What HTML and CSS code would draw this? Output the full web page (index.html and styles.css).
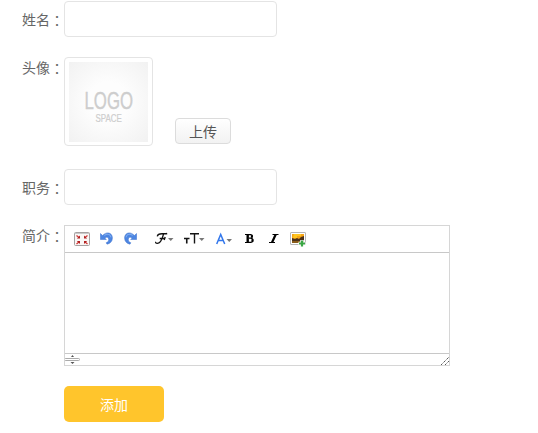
FILE: index.html
```html
<!DOCTYPE html>
<html lang="zh-CN">
<head>
<meta charset="utf-8">
<title>添加</title>
<link rel="stylesheet" href="styles.css">
</head>
<body>
<form class="form">
  <div class="row row-name">
    <label class="label" for="name">姓名<span class="colon" lang="zh-TW">：</span></label>
    <input class="input" id="name" type="text">
  </div>
  <div class="row row-avatar">
    <span class="label">头像<span class="colon" lang="zh-TW">：</span></span>
    <div class="avatar">
      <svg width="79" height="80" viewBox="0 0 79 80">
        <defs><radialGradient id="shade" r=".72"><stop offset=".35" stop-color="#fdfdfd"/><stop offset="1" stop-color="#f1f1f1"/></radialGradient></defs>
        <rect width="79" height="80" fill="url(#shade)"/>
        <text class="logo logo-large" transform="translate(15.500 47) scale(.7 1)">LOGO</text>
        <text class="logo logo-small" transform="translate(26.500 59.500) scale(.76 1)">SPACE</text>
      </svg>
    </div>
    <button class="upload" type="button">上传</button>
  </div>
  <div class="row row-job">
    <label class="label" for="job">职务<span class="colon" lang="zh-TW">：</span></label>
    <input class="input" id="job" type="text">
  </div>
  <div class="row row-intro">
    <span class="label">简介<span class="colon" lang="zh-TW">：</span></span>
    <div class="editor">
      <div class="toolbar">
        <svg class="icon full" width="16" height="14" viewBox="0 0 16 14">
          <rect x=".5" y=".5" width="15" height="13" rx="1" fill="#faf7f6" stroke="#a5a1a1"/>
          <path d="M1 1.500h14" stroke="#c9c9c9"/>
          <path d="M2.500 3.500l2.500 2M13.500 3.500l-2.500 2M2.500 12l2.500-2M13.500 12l-2.500-2" stroke="#d03a3a" stroke-width="1.300"/>
          <path d="M6 3.500v3H2.800zM10 3.500v3h3.200zM6 12V9H2.800zM10 12V9h3.200z" fill="#b02020"/>
        </svg>
        <svg class="icon undo" width="13" height="13" viewBox="0 0 13 13">
          <path d="M.4 1.500v6H6.300L4.800 6C6.600 4.500 8.700 5 8.700 7.300c0 1.800-.7 2.700-2.500 3.500l.8 1.400c3.400-.7 5.400-2.900 5.400-6.200C12.400.6 6.600-1 2.600 3.500z" fill="#4d86e2" stroke="#3c70cd" stroke-width=".5"/>
          <path d="M4.500 3.400c2.800-2.100 6-1.200 6.400 1.900" fill="none" stroke="#90b9f5"/>
        </svg>
        <svg class="icon redo" width="13" height="13" viewBox="0 0 13 13">
          <g transform="translate(13 0) scale(-1 1)">
            <path d="M.4 1.500v6H6.300L4.800 6C6.600 4.500 8.700 5 8.700 7.300c0 1.800-.7 2.700-2.500 3.500l.8 1.400c3.400-.7 5.400-2.900 5.400-6.200C12.400.6 6.600-1 2.600 3.500z" fill="#4d86e2" stroke="#3c70cd" stroke-width=".5"/>
            <path d="M4.500 3.400c2.800-2.100 6-1.200 6.400 1.900" fill="none" stroke="#90b9f5"/>
          </g>
        </svg>
        <svg class="icon font" width="19" height="14" viewBox="0 0 19 14">
          <path d="M2.300 4.400C2.600 2.300 4.500 1.700 7 1.700c2.300 0 3.700.3 5.200-.2M8.500 2C7.500 5.500 6.600 11.300 2.200 11.300c-1.400 0-1.800-.8-1.300-1.500M4.700 6.500h5M10.200 5L9.200 8" fill="none" stroke="#111" stroke-width="1.350"/>
          <path d="M13 6h5.500L15.750 9z" fill="#777"/>
        </svg>
        <svg class="icon size" width="21" height="14" viewBox="0 0 21 14">
          <path d="M0 6.500h5.500M2.750 6v5.500" fill="none" stroke="#151515" stroke-width="1.600"/>
          <path d="M6 1.800h9M10.500 1.500v10" fill="none" stroke="#151515" stroke-width="1.400"/>
          <path d="M15 6h5.500l-2.750 3z" fill="#777"/>
        </svg>
        <svg class="icon color" width="17" height="14" viewBox="0 0 17 14">
          <path d="M.7 12L4.700 2.500 8.700 12M2.200 8.600h5" fill="none" stroke="#3478ec" stroke-width="1.500"/>
          <path d="M10.500 7H16l-2.750 3z" fill="#777"/>
        </svg>
        <svg class="icon bold" width="10" height="10" viewBox="0 0 10 10">
          <path d="M0 .5h6M0 8.500h6" stroke="#000"/>
          <path d="M2.700 0v9" stroke="#000" stroke-width="2.400"/>
          <path d="M4 .6h1.300c2.600 0 2.600 3.600 0 3.600H4h1.500c3.200 0 3.200 4.200 0 4.200H4" fill="none" stroke="#000" stroke-width="1.200"/>
          <path d="M6.900 1.300v2.200M7.400 5.200v2.600" stroke="#000" stroke-width="2"/>
        </svg>
        <svg class="icon italic" width="10" height="10" viewBox="0 0 10 10">
          <path d="M3.500.5H9.500M0 8.500h6" stroke="#000"/>
          <path d="M6.700.5L3 8.500" stroke="#000" stroke-width="2.200"/>
        </svg>
        <svg class="icon image" width="16" height="16" viewBox="0 0 16 16">
          <rect x=".5" y=".5" width="15" height="12" rx=".5" fill="#fff" stroke="#b6b6b6"/>
          <path d="M2 2h12v5H2z" fill="#f6a316"/>
          <path d="M4 2h7v2H7v2H3z" fill="#ffc61f"/>
          <path d="M2 6l3 1 2-1 2 1 2-2 3-1v7H2z" fill="#4a3019"/>
          <path d="M2 9h12v2H2z" fill="#8a5d1b"/>
          <path d="M8.500 11.500h7M12 8v7" stroke="#fff" stroke-width="3.500"/>
          <path d="M9 11.500h6M12 8.500v6" stroke="#3ba645" stroke-width="2.200"/>
        </svg>
      </div>
      <div class="content"></div>
      <div class="status">
        <svg width="15" height="11" viewBox="0 0 15 11">
          <path d="M6 3h3L7.500 1zM5.500 8h4l-2 2z" fill="#555"/>
          <rect x="-.5" y="4.500" width="15" height="2" rx=".8" fill="#fff" stroke="#aaa"/>
        </svg>
        <svg width="8" height="8" viewBox="0 0 8 8"><path d="M0 8l8-8M4 8l4-4" stroke="#555" stroke-dasharray="1.410 .7"/></svg>
      </div>
    </div>
  </div>
  <button class="submit" type="button">添加</button>
</form>
</body>
</html>
```
FILE: styles.css
```css
* {
  box-sizing: border-box;
}

body {
  margin: 0;
  background: #fff;
  color: #666;
  font: 14px/20px "Noto Sans CJK SC", sans-serif;
}

.form {
  padding: 1px 0 0 22px;
}

.row {
  display: flex;
  align-items: flex-start;
}

.row-name {
  margin-bottom: 20px;
}

.row-avatar {
  margin-bottom: 23px;
}

.row-job {
  margin-bottom: 20px;
}

.row-intro {
  margin-bottom: 20px;
}

.label {
  display: flex;
  width: 42px;
  flex: none;
  padding-top: 8px;
  white-space: nowrap;
}

.row-avatar .label,
.row-intro .label {
  padding-top: 0;
}

.colon {
  margin-top: 1px;
  font-family: "Noto Sans CJK TC", sans-serif;
}

.input {
  width: 213px;
  height: 36px;
  padding: 0 8px;
  border: 1px solid #e4e4e4;
  border-radius: 4px;
  background: #fff;
  font: inherit;
}

.avatar {
  width: 89px;
  height: 89px;
  padding: 4px;
  border: 1px solid #e4e4e4;
  border-radius: 4px;
}

.avatar svg,
.toolbar svg,
.status svg {
  display: block;
  flex: none;
}

.logo {
  fill: #cdcdcd;
  stroke: #cdcdcd;
  font-family: "Liberation Sans", sans-serif;
}

.logo-large {
  font-size: 24px;
  stroke-width: .4px;
}

.logo-small {
  font-size: 10.5px;
  stroke-width: .2px;
}

.upload {
  width: 56px;
  height: 26px;
  margin: 61px 0 0 22px;
  padding: 0;
  border: 1px solid #dcdcdc;
  border-radius: 4px;
  background: linear-gradient(#fff, #f2f2f2);
  color: #555;
  font: inherit;
}

.editor {
  width: 386px;
  height: 141px;
  display: flex;
  flex-direction: column;
  border: 1px solid #d6d6d6;
}

.toolbar {
  display: flex;
  align-items: flex-start;
  height: 27px;
  padding: 6px 0 0 9px;
  border-bottom: 1px solid #c8c8c8;
}

.undo {
  margin-left: 10px;
}

.redo {
  margin-left: 11px;
}

.font {
  margin-left: 18px;
}

.size {
  margin-left: 10px;
}

.color {
  margin-left: 11px;
}

.bold {
  margin: 2px 0 0 12px;
}

.italic {
  margin: 2px 0 0 14px;
}

.image {
  margin-left: 11px;
}

.content {
  flex: 1;
}

.status {
  display: flex;
  justify-content: space-between;
  align-items: flex-end;
  height: 12px;
  border-top: 1px solid #c8c8c8;
}

.submit {
  display: block;
  width: 100px;
  height: 36px;
  margin-left: 42px;
  padding: 0;
  border: 0;
  border-radius: 5px;
  background: #ffc52c;
  color: #fff;
  font: inherit;
}
```
